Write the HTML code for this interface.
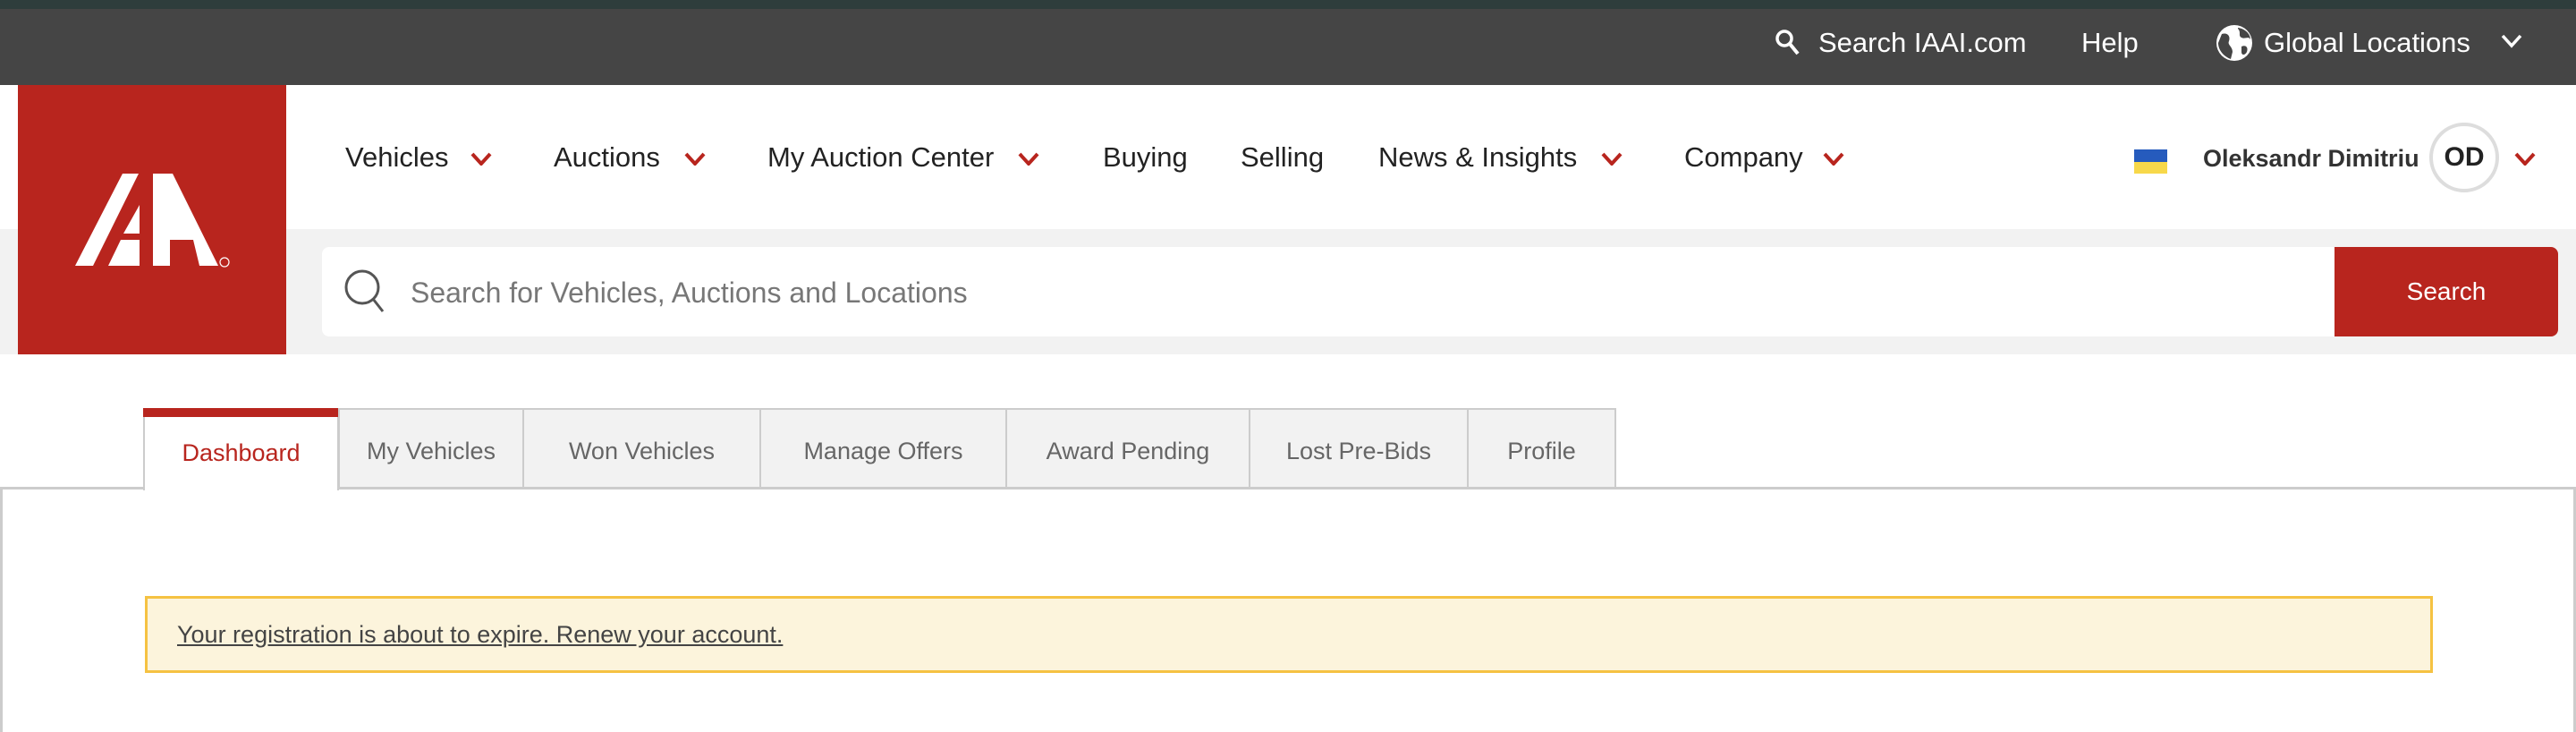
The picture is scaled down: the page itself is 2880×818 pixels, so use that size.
<!DOCTYPE html>
<html style="width:2880px;height:818px;overflow:hidden"><head><meta charset="utf-8">
<style>
*{margin:0;padding:0;box-sizing:border-box}
body{width:2880px;height:818px;overflow:hidden;background:#fff;font-family:"Liberation Sans",Arial,sans-serif;position:relative}
.abs{position:absolute}
.topstrip{left:0;top:0;width:2880px;height:10px;background:#2e3d3c}
.topbar{left:0;top:10px;width:2880px;height:85px;background:#454545}
.tb{color:#fff;font-size:31px;top:30px}
.nav{font-size:31px;color:#222;top:158px}
.chev{width:26px;height:16px}
.gray{left:0;top:256px;width:2880px;height:140px;background:#f2f2f2}
.logo{left:20px;top:95px;width:300px;height:301px;background:#b8251e}
.input{left:360px;top:276px;width:2260px;height:100px;background:#fff;border-radius:8px 0 0 8px}
.btn{left:2610px;top:276px;width:250px;height:100px;background:#b8251e;border-radius:0 8px 8px 0;color:#fff;font-size:28px;text-align:center;line-height:100px}
.content{left:0;top:544px;width:2880px;height:274px;border:3px solid #ccc;border-bottom:none}
.tab{top:456px;height:91px;background:#f2f2f2;border:2px solid #ccc;border-bottom:3px solid #ccc;color:#666;font-size:27px;text-align:center;line-height:92px}
.alert{left:162px;top:666px;width:2558px;height:86px;background:#fcf4dc;border:3px solid #f5c242;font-size:27px;color:#444;padding-left:33px;line-height:80px}
.alert span{text-decoration:underline}
</style></head><body>
<div class="abs topstrip"></div>
<div class="abs topbar"></div>
<svg class="abs" style="left:1984px;top:32px" width="30" height="32" viewBox="0 0 30 32"><circle cx="11" cy="11" r="8" fill="none" stroke="#fff" stroke-width="3.5"/><line x1="17" y1="17" x2="26" y2="28" stroke="#fff" stroke-width="4"/></svg>
<div class="abs tb" style="left:2033px">Search IAAI.com</div>
<div class="abs tb" style="left:2327px">Help</div>
<svg class="abs" style="left:2476px;top:26px" width="44" height="44" viewBox="0 0 44 44"><circle cx="22" cy="22" r="20" fill="#fff"/><path d="M8 12 C14 10 18 14 16 20 C14 24 20 26 20 32 L18 40 C10 37 4 30 4 22 Z" fill="#454545"/><path d="M26 6 C30 10 26 14 30 16 C34 18 38 14 40 18 C40 12 34 6 26 5 Z" fill="#454545"/><path d="M30 26 C34 24 38 26 36 32 C34 36 30 36 30 32 Z" fill="#454545"/></svg>
<div class="abs tb" style="left:2531px">Global Locations</div>
<svg class="abs" style="left:2796px;top:38px" width="24" height="16" viewBox="0 0 24 16"><path d="M2 2 L12 13 L22 2" fill="none" stroke="#fff" stroke-width="3.5"/></svg>

<div class="abs gray"></div>
<div class="abs logo"></div>
<svg class="abs" style="left:20px;top:95px" width="300" height="301" viewBox="0 0 300 301">
<g fill="#fff" transform="translate(-20,-95)">
<polygon points="84,297 104,297 155,194 137,194"/>
<polygon points="121,297 135,268 156,268 156,297"/>
<polygon points="138,261 156,229 156,261"/>
<polygon points="171,194 193,194 244,297 223,297 216,268 190,268 190,297 171,297"/>
</g>
<circle cx="231" cy="198" r="5" fill="none" stroke="#fff" stroke-width="1.2"/>
</svg>

<div class="abs nav" style="left:386px">Vehicles</div>
<div class="abs nav" style="left:619px">Auctions</div>
<div class="abs nav" style="left:858px">My Auction Center</div>
<div class="abs nav" style="left:1233px">Buying</div>
<div class="abs nav" style="left:1387px">Selling</div>
<div class="abs nav" style="left:1541px">News &amp; Insights</div>
<div class="abs nav" style="left:1883px">Company</div>
<svg width="0" height="0" style="position:absolute"><defs><path id="cv" d="M3 3 L13 14 L23 3" fill="none" stroke="#b8251e" stroke-width="4"/></defs></svg>
<svg class="abs chev" style="left:525px;top:169px"><use href="#cv"/></svg>
<svg class="abs chev" style="left:764px;top:169px"><use href="#cv"/></svg>
<svg class="abs chev" style="left:1137px;top:169px"><use href="#cv"/></svg>
<svg class="abs chev" style="left:1789px;top:169px"><use href="#cv"/></svg>
<svg class="abs chev" style="left:2037px;top:169px"><use href="#cv"/></svg>
<div class="abs" style="left:2386px;top:167px;width:37px;height:14px;background:#265bbd"></div>
<div class="abs" style="left:2386px;top:181px;width:37px;height:13px;background:#f7d84a"></div>
<div class="abs" style="left:2463px;top:162px;font-size:27px;font-weight:bold;color:#333">Oleksandr Dimitriu</div>
<div class="abs" style="left:2716px;top:137px;width:78px;height:78px;border:4px solid #ddd;border-radius:50%;text-align:center;line-height:70px;font-size:30px;font-weight:bold;color:#222">OD</div>
<svg class="abs chev" style="left:2810px;top:169px"><use href="#cv"/></svg>

<div class="abs input"></div>
<svg class="abs" style="left:384px;top:300px" width="52" height="54" viewBox="0 0 52 54"><circle cx="21" cy="21" r="18" fill="none" stroke="#555" stroke-width="3"/><line x1="33" y1="34" x2="44" y2="48" stroke="#555" stroke-width="3"/></svg>
<div class="abs" style="left:459px;top:309px;font-size:32px;color:#777">Search for Vehicles, Auctions and Locations</div>
<div class="abs btn">Search</div>

<div class="abs content"></div>
<div class="abs" style="left:160px;top:456px;width:219px;height:92px;background:#fff;border-left:2px solid #ccc;border-right:2px solid #ccc"></div>
<div class="abs" style="left:160px;top:456px;width:219px;height:10px;background:#b8251e"></div>
<div class="abs" style="left:160px;top:476px;width:219px;text-align:center;font-size:27px;color:#b8251e;line-height:60px">Dashboard</div>
<div class="abs tab" style="left:378px;width:208px">My Vehicles</div>
<div class="abs tab" style="left:584px;width:267px">Won Vehicles</div>
<div class="abs tab" style="left:849px;width:277px">Manage Offers</div>
<div class="abs tab" style="left:1124px;width:274px">Award Pending</div>
<div class="abs tab" style="left:1396px;width:246px">Lost Pre-Bids</div>
<div class="abs tab" style="left:1640px;width:167px">Profile</div>

<div class="abs alert"><span>Your registration is about to expire. Renew your account.</span></div>
</body></html>
